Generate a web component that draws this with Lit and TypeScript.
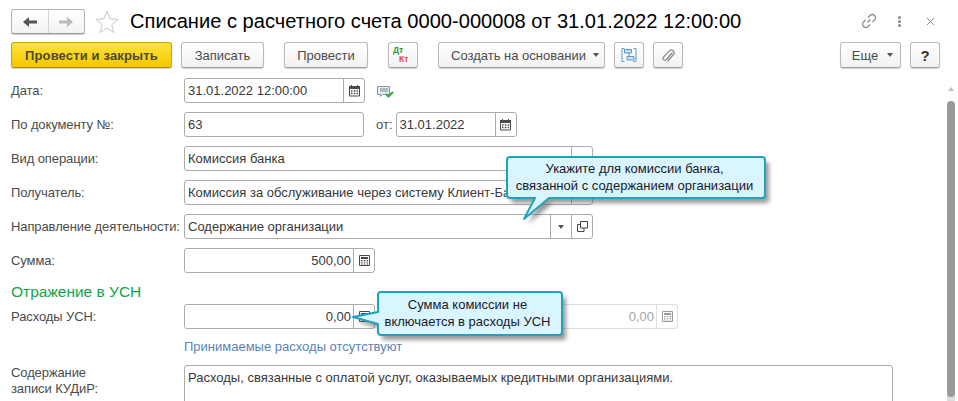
import { LitElement, html, css, svg } from "lit";
import { customElement } from "lit/decorators.js";

const cal = html`<svg width="13" height="13" viewBox="0 0 13 13"><path d="M1.500 2.500h10v9.500h-10z" fill="#fff" stroke="#4a4a4a"/><path d="M1 2h11v3H1z" fill="#4a4a4a"/><path d="M3.500 1v2M9.500 1v2" stroke="#4a4a4a"/><path d="M3 7h1.500M5.800 7h1.500M8.600 7h1.500M3 9.500h1.500M5.800 9.500h1.500M8.600 9.500h1.500" stroke="#4a4a4a" stroke-width="1.400"/></svg>`;
const calc = (c = "#4a4a4a") => html`<svg width="13" height="13" viewBox="0 0 13 13"><path d="M1.500 1.500h10v10h-10z" fill="#fff" stroke="${c}"/><path d="M3 3h7v2H3z" fill="${c}"/><path d="M3 6.500h1.500M5.800 6.500h1.500M8.600 6.500h1.500M3 8.200h1.500M5.800 8.200h1.500M8.600 8.200h1.500M3 10h1.500M5.800 10h1.500M8.600 10h1.500" stroke="${c}"/></svg>`;
const caret = html`<span class="caret"></span>`;
const open = html`<svg width="13" height="13" viewBox="0 0 13 13" fill="none" stroke="#444"><path d="M4.500 1.500h7v6.500h-7z"/><path d="M4.500 4.500h-3v7h6.500v-3.500"/></svg>`;

@customElement("app-root")
export class AppRoot extends LitElement {
  static styles = css`
    :host { display: block; width: 958px; height: 401px; overflow: hidden; position: relative; background: #fff;
      font-family: "Liberation Sans", Arial, sans-serif; font-size: 13px; color: #4b4b4b; }
    * { box-sizing: border-box; }
    .head { display: flex; align-items: center; height: 42px; padding: 3px 0 0 11px; }
    .nav { display: flex; width: 74px; height: 25px; border: 1px solid #b5b5b5; border-bottom-color: #9a9a9a; border-radius: 3px;
      background: linear-gradient(#fff, #f3f3f3); box-shadow: 0 1px 1px #ccc; margin-top: -2px; }
    .nav div { flex: 1; display: flex; align-items: center; justify-content: center; }
    .nav div + div { border-left: 1px solid #d4d4d4; }
    .star { margin: -2px 0 0 10px; display: block; }
    .title { margin: -2px 0 0 11px; font-size: 20.100px; color: #000; white-space: nowrap; flex: 1; }
    .win { display: flex; align-items: center; margin: -3px 0 0 0; padding-right: 23px; }
    .win .dots { margin: 0 25px 0 21px; display: flex; flex-direction: column; gap: 1px; }
    .win .dots i { width: 3px; height: 3px; background: #888; border-radius: 50%; display: block; }
    .bar { display: flex; height: 27px; padding-left: 11px; align-items: flex-start; }
    .btn { height: 26px; border: 1px solid #b9b9b9; border-bottom-color: #a0a0a0; border-radius: 3px; background: linear-gradient(#fff, #f2f2f2);
      box-shadow: 0 1px 1px #d0d0d0; display: flex; align-items: center; justify-content: center; color: #4b4b4b; white-space: nowrap; }
    .btn.primary { width: 161px; background: linear-gradient(#fde23c, #f4c800); border-color: #c9a80a; border-bottom-color: #a98f10;
      font-weight: bold; color: #4e4a2c; letter-spacing: .15px; }
    .btn.create { width: 167px; margin-left: 20px; padding-left: 7px; }
    .btn.more { width: 61px; margin-left: 157px; padding-left: 4px; }
    .caret { display: inline-block; width: 0; height: 0; border: 3px solid transparent; border-top: 4px solid #555; border-bottom: 0; }
    .btn .caret { margin-left: 7px; }
    .btn.more .caret { margin-left: 9px; }
    .form { padding: 9px 0 0 11px; display: flex; flex-direction: column; }
    .row { display: flex; align-items: center; height: 25px; margin-bottom: 9px; }
    .lab { width: 173px; flex: none; white-space: nowrap; letter-spacing: -.1px; }
    .inp { height: 25px; border: 1px solid #ababab; border-radius: 3px; display: flex; background: #fff; flex: none; color: #383838; }
    .inp .v { flex: 1; padding: 0 3px; line-height: 23px; white-space: nowrap; overflow: hidden; }
    .inp .v.r { text-align: right; padding-right: 2px; }
    .inp .b { width: 21px; border-left: 1px solid #ababab; display: flex; align-items: center; justify-content: center; flex: none; }
    .mark { margin-left: 12px; display: block; margin-top: 2px; }
    .ot { margin: 0 3px 0 12px; }
    .h { height: 23px; margin: -1px 0 0 0; font-size: 15.500px; color: #0fa54a; line-height: 22px; }
    .dis { border-color: #dedede; color: #a5a5a5; }
    .dis .b { border-color: #dedede; }
    .link { margin: 0 0 0 173px; height: 27px; line-height: 18px; color: #5b83b8; }
    .kudir { display: flex; }
    .kudir .lab { line-height: 16px; padding-top: 0; }
    .area { width: 709px; height: 60px; border: 1px solid #ababab; border-radius: 3px; padding: 4px 3px; color: #383838; white-space: nowrap; }
    .sb { position: absolute; left: 947px; top: 101px; width: 8px; height: 296px; background: #9a9a9a; border-radius: 4px; }
    .sbu { position: absolute; left: 948px; top: 87px; border: 3px solid transparent; border-bottom: 4px solid #bdbdbd; border-top: 0; }
    .sbt { position: absolute; left: 947px; top: 393px; width: 8px; height: 8px; background: #dcdcdc; }
    .tip { position: absolute; color: #1a1a2a; font-size: 13px; line-height: 16.500px; text-align: center; }
    .tip svg { position: absolute; left: 0; top: 0; overflow: visible; }
    .tip span { position: absolute; display: block; white-space: nowrap; }
  `;
  private bubble(d: string, w: number, h: number) {
    return html`<svg width="${w}" height="${h}" viewBox="0 0 ${w} ${h}">
      <defs><filter id="s" x="-10%" y="-10%" width="125%" height="135%"><feGaussianBlur stdDeviation="2.200"/></filter></defs>
      ${svg`<path d="${d}" fill="#555" opacity=".6" transform="translate(4 5)" filter="url(#s)"/>
      <path d="${d}" fill="#d9f5ff" stroke="#22a2bd" stroke-width="2" stroke-linejoin="round"/>`}
    </svg>`;
  }
  render() {
    return html`
      <div class="head">
        <div class="nav">
          <div><svg width="14" height="10" viewBox="0 0 14 10"><path d="M6 0v3.500h8v3H6V10L0 5z" fill="#555"/></svg></div>
          <div><svg width="14" height="10" viewBox="0 0 14 10"><path d="M8 0v3.500H0v3h8V10l6-5z" fill="#bbb"/></svg></div>
        </div>
        <svg class="star" width="24" height="23" viewBox="0 0 24 23"><path d="M12 1l3 7.800 8 .6-6.200 5.300 2 7.800L12 18.200 5.200 22.500l2-7.800L1 9.400l8-.6z" fill="#fff" stroke="#c8c8c8"/></svg>
        <div class="title">Списание с расчетного счета 0000-000008 от 31.01.2022 12:00:00</div>
        <div class="win">
          <svg width="16" height="16" viewBox="0 0 16 16" fill="none" stroke="#8a8a8a" stroke-width="1.200"><path d="M6.500 9.500l3-3M7 4.500l2-2a3 3 0 0 1 4.500 4.500l-2 2M9 11.500l-2 2A3 3 0 0 1 2.500 9l2-2"/></svg>
          <div class="dots"><i></i><i></i><i></i></div>
          <svg width="9" height="9" viewBox="0 0 9 9" stroke="#888" stroke-width="1"><path d="M1 1l7 7M8 1l-7 7"/></svg>
        </div>
      </div>
      <div class="bar">
        <div class="btn primary">Провести и закрыть</div>
        <div class="btn" style="width:83px;margin-left:9px">Записать</div>
        <div class="btn" style="width:84px;margin-left:20px">Провести</div>
        <div class="btn" style="width:30px;margin-left:20px"><svg width="20" height="18" viewBox="0 0 20 18" font-family="Liberation Sans" font-size="8.500" font-weight="bold"><text x="0" y="7" fill="#1f9a3f">Дт</text><text x="6" y="16" fill="#e0453a">Кт</text></svg></div>
        <div class="btn create">Создать на основании${caret}</div>
        <div class="btn" style="width:30px;margin-left:9px"><svg width="16" height="16" viewBox="0 0 16 16" fill="none" stroke="#5a9ccb"><path d="M3.500 1.500h-2.500v13h2.500M12.500 1.500H15v13h-2.500"/><path d="M3.500 2.500h7v3.500h-7zM6 9.500h7v3.500H6z" fill="#c3dff0"/><path d="M8 6v3.500"/></svg></div>
        <div class="btn" style="width:30px;margin-left:9px"><svg width="14" height="15" viewBox="0 0 14 15" fill="none" stroke="#888" stroke-width="1.200"><path d="M11.500 4.500l-6 7a1.800 1.800 0 0 1-3-2.300l6.500-7a3 3 0 0 1 4 3.800l-6.500 7.500"/></svg></div>
        <div class="btn more">Еще${caret}</div>
        <div class="btn" style="width:30px;margin-left:9px;font-weight:bold;font-size:15px;color:#333">?</div>
      </div>
      <div class="form">
        <div class="row"><div class="lab">Дата:</div><div class="inp" style="width:181px"><div class="v">31.01.2022 12:00:00</div><div class="b">${cal}</div></div>
          <svg class="mark" width="17" height="13" viewBox="0 0 17 13"><path d="M.5 1.500h12v8h-7l-2 2v-2h-3z" fill="#e4eef0" stroke="#7f9aa3"/><path d="M3 4h8M3 6h8" stroke="#6f8c96"/><path d="M9 9l2.500 2.500L16 7" fill="none" stroke="#35a83f" stroke-width="2"/></svg></div>
        <div class="row"><div class="lab">По документу №:</div><div class="inp" style="width:180px"><div class="v">63</div></div><div class="ot">от:</div><div class="inp" style="width:121px"><div class="v">31.01.2022</div><div class="b">${cal}</div></div></div>
        <div class="row"><div class="lab">Вид операции:</div><div class="inp" style="width:409px"><div class="v">Комиссия банка</div><div class="b">${caret}</div></div></div>
        <div class="row"><div class="lab">Получатель:</div><div class="inp" style="width:409px"><div class="v">Комиссия за обслуживание через систему Клиент-Банк</div><div class="b">${open}</div></div></div>
        <div class="row"><div class="lab">Направление деятельности:</div><div class="inp" style="width:409px"><div class="v">Содержание организации</div><div class="b">${caret}</div><div class="b">${open}</div></div></div>
        <div class="row"><div class="lab">Сумма:</div><div class="inp" style="width:191px"><div class="v r">500,00</div><div class="b">${calc()}</div></div></div>
        <div class="h">Отражение в УСН</div>
        <div class="row"><div class="lab">Расходы УСН:</div><div class="inp" style="width:191px"><div class="v r">0,00</div><div class="b">${calc()}</div></div>
          <div class="inp dis" style="width:191px;margin-left:112px"><div class="v r">0,00</div><div class="b">${calc("#9a9a9a")}</div></div></div>
        <div class="link">Принимаемые расходы отсутствуют</div>
        <div class="kudir"><div class="lab">Содержание<br>записи КУДиР:</div><div class="area">Расходы, связанные с оплатой услуг, оказываемых кредитными организациями.</div></div>
      </div>
      <div class="sbu"></div><div class="sbt"></div><div class="sb"></div>
      <div class="tip" style="left:507px;top:157px;width:259px;height:62px">
        ${this.bubble("M3 0H255a3 3 0 0 1 3 3V38a3 3 0 0 1-3 3H42L17 62 28 41H3a3 3 0 0 1-3-3V3a3 3 0 0 1 3-3z", 259, 62)}
        <span style="left:-2px;width:259px;top:4px">Укажите для комиссии банка,<br>связанной с содержанием организации</span>
      </div>
      <div class="tip" style="left:352px;top:292px;width:210px;height:44px">
        ${this.bubble("M26 3a3 3 0 0 1 3-3H207a3 3 0 0 1 3 3V40a3 3 0 0 1-3 3H29a3 3 0 0 1-3-3V32L1 25l25-5z", 210, 44)}
        <span style="left:23px;width:185px;top:5px">Сумма комиссии не<br>включается в расходы УСН</span>
      </div>
    `;
  }
}
